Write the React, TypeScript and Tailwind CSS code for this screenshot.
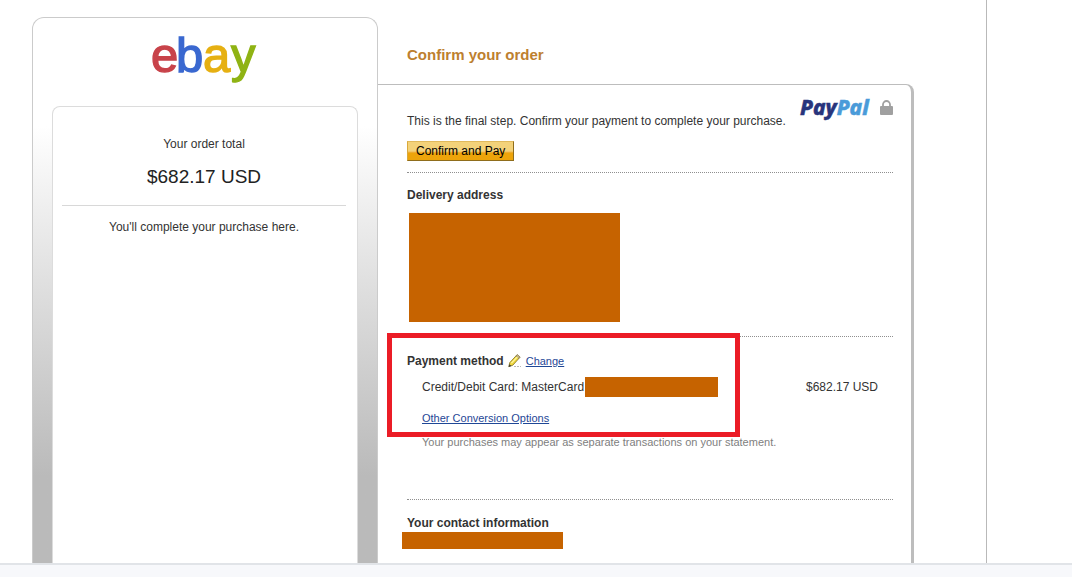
import React from 'react';

const EbayLogo: React.FC = () => (
  <svg width="116" height="60" viewBox="0 0 116 60" role="img" aria-label="ebay">
    <g fontFamily="Liberation Sans, Arial, sans-serif" fontSize="49" strokeWidth="1.4">
      <text x="4" y="44" fill="#c8434a" stroke="#c8434a">e</text>
      <text x="29" y="44" fill="#3a68d0" stroke="#3a68d0">b</text>
      <text x="56" y="44" fill="#e6b012" stroke="#e6b012">a</text>
      <text x="84" y="44" fill="#8fb314" stroke="#8fb314">y</text>
    </g>
  </svg>
);

const PayPalLogo: React.FC = () => (
  <svg width="78" height="32" viewBox="0 0 78 32" role="img" aria-label="PayPal">
    <text x="2" y="22" fontFamily="Noto Sans, sans-serif" fontSize="21" fontWeight="800" fontStyle="italic" strokeWidth="0.5">
      <tspan fill="#28347c" stroke="#28347c">Pay</tspan>
      <tspan fill="#4a9bd9" stroke="#4a9bd9">Pal</tspan>
    </text>
  </svg>
);

const LockIcon: React.FC = () => (
  <svg width="13" height="16" viewBox="0 0 13 16" aria-hidden="true">
    <path d="M3 7V4.5a3.5 3.5 0 0 1 7 0V7" fill="none" stroke="#a0a0a0" strokeWidth="1.8" />
    <rect y="6" width="13" height="9" rx="1" fill="#a0a0a0" />
  </svg>
);

const PencilIcon: React.FC = () => (
  <svg width="14" height="14" viewBox="0 0 14 14" aria-hidden="true">
    <path d="M.8 12.6l1-4L9 .8l3 2.4L4.8 11.2z" fill="#f0d83c" stroke="#8b7a2c" strokeWidth="0.9" />
    <path d="M8 2l1.2-1.4 3 2.4L11 4.4z" fill="#c9b98c" stroke="#7d7350" strokeWidth="0.6" />
    <path d="M3.4 9.2l6-6.4" stroke="#fff7a8" strokeWidth="1.2" />
    <path d="M.6 13l.8-2.8 2 1.7z" fill="#3a3a3a" />
    <path d="M6 12.5h7" stroke="#b8b8b8" strokeDasharray="2 1" />
  </svg>
);

const linkClass = 'text-[11px] text-[#1f4796] underline hover:no-underline';
const sectionClass = 'border-t border-dotted border-[#8f8f8f]';

const OrderSummary: React.FC = () => (
  <aside className="mt-[17px] flex w-[346px] shrink-0 flex-col rounded-t-xl border border-b-0 border-[#cbcbcb] bg-linear-to-b from-white from-[108px] to-[#bababa] to-[458px] px-[19px] text-center">
    <div className="flex justify-center pt-[10px] pb-[18px]">
      <EbayLogo />
    </div>
    <div className="flex-1 rounded-t-lg border border-b-0 border-[#dcdcdc] bg-white pt-[29px] pr-[11px] pl-[9px]">
      <p>Your order total</p>
      <p className="mt-[13px] text-[19px] leading-6 text-[#222]">$682.17 USD</p>
      <p className="mt-4 border-t border-[#d8d8d8] pt-[13px]">You'll complete your purchase here.</p>
    </div>
  </aside>
);

export default function App() {
  return (
    <div className="flex min-h-screen flex-col bg-white font-['Liberation_Sans',Arial,sans-serif] text-xs text-[#333]">
      <div className="flex w-full max-w-[987px] flex-1 border-r border-[#b9b9b9] pr-[72px] pl-8">
        <OrderSummary />

        <main className="flex flex-1 flex-col">
          <h1 className="pt-[45px] pb-[19px] pl-[29px] text-[15px] leading-5 font-bold text-[#bd802f]">
            Confirm your order
          </h1>

          <div className="flex-1 rounded-tr-lg border-t border-r-3 border-[#bdbdbd] pr-[18px] pl-[29px]">
            <div className="flex justify-between">
              <div className="pt-7 pb-[11px]">
                <p>This is the final step. Confirm your payment to complete your purchase.</p>
                <button
                  type="button"
                  className="mt-3 block h-5 border border-t-[#e0b95c] border-r-[#8f6d1c] border-b-[#8f6d1c] border-l-[#d9a93c] bg-linear-to-b from-[#f3d27a] from-50% to-[#eda40a] to-60% px-2 leading-4 text-black"
                >
                  Confirm and Pay
                </button>
              </div>
              <div className="flex items-start gap-1 pt-2">
                <PayPalLogo />
                <div className="pt-[7px]">
                  <LockIcon />
                </div>
              </div>
            </div>

            <section className={`${sectionClass} pt-[14px] pb-[14px]`}>
              <h2 className="font-bold">Delivery address</h2>
              <div className="mt-[10px] ml-[2px] h-[109px] w-[211px] bg-[#c66300]" />
            </section>

            <section className={`${sectionClass} relative pt-4 pb-[49px]`}>
              <div className="flex items-center">
                <h2 className="font-bold">Payment method</h2>
                <span className="mx-1">
                  <PencilIcon />
                </span>
                <a href="#change" className={linkClass}>Change</a>
              </div>
              <div className="mt-[10px] flex justify-between pr-[15px] pl-[15px]">
                <div className="flex">
                  <span>Credit/Debit Card: MasterCard X</span>
                  <span className="-mt-0.5 -mb-2 -ml-2.5 h-5 w-[133px] bg-[#c66300]" />
                </div>
                <span>$682.17 USD</span>
              </div>
              <p className="mt-[15px] pl-[15px] leading-4">
                <a href="#conversion" className={linkClass}>Other Conversion Options</a>
              </p>
              <p className="mt-2 pl-[15px] text-[11px] leading-4 text-[#808080]">
                Your purchases may appear as separate transactions on your statement.
              </p>
              {/* highlight frame over the payment rows */}
              <div className="pointer-events-none absolute -top-1 -left-5 h-[104px] w-[353px] border-5 border-[#eb1c26]" />
            </section>

            <section className={`${sectionClass} pt-[15px] pb-[14px]`}>
              <h2 className="font-bold">Your contact information</h2>
              <div className="mt-px -ml-[5px] h-[17px] w-[161px] bg-[#c66300]" />
            </section>
          </div>
        </main>
      </div>

      <footer className="h-[15px] border-t-2 border-[#e1e4e8] bg-[#f7f8fb]" />
    </div>
  );
}
